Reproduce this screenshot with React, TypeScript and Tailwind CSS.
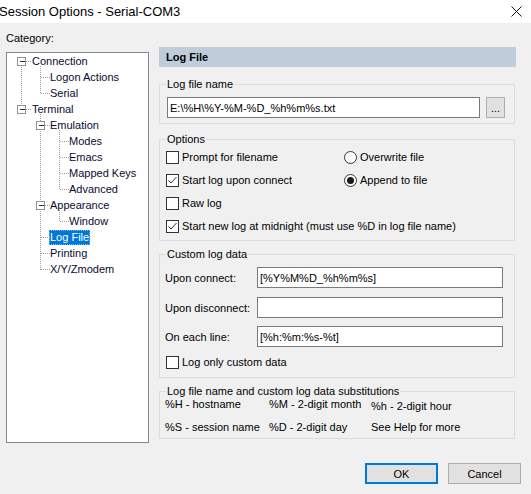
type TreeItem = {
  label: string;
  level: 0 | 1 | 2;
  box?: boolean;
  selected?: boolean;
};

const TREE: TreeItem[] = [
  { label: "Connection", level: 0, box: true },
  { label: "Logon Actions", level: 1 },
  { label: "Serial", level: 1 },
  { label: "Terminal", level: 0, box: true },
  { label: "Emulation", level: 1, box: true },
  { label: "Modes", level: 2 },
  { label: "Emacs", level: 2 },
  { label: "Mapped Keys", level: 2 },
  { label: "Advanced", level: 2 },
  { label: "Appearance", level: 1, box: true },
  { label: "Window", level: 2 },
  { label: "Log File", level: 1, selected: true },
  { label: "Printing", level: 1 },
  { label: "X/Y/Zmodem", level: 1 },
];

const INDENT = ["pl-[25px]", "pl-[43px]", "pl-[62px]"];
const LX = [14.5, 33.5, 52.5];

const cy = (i: number) => 16 * i + 8.5;

// dotted connector lines + expand boxes
function TreeLines() {
  const dot = { stroke: "#a0a0a0", strokeDasharray: "1 1", shapeRendering: "crispEdges" as const };
  const lines: JSX.Element[] = [];
  const v = (x: number, y1: number, y2: number, k: string) =>
    lines.push(<line key={k} x1={x} x2={x} y1={y1} y2={y2} {...dot} />);
  const h = (x1: number, x2: number, y: number, k: string) =>
    lines.push(<line key={k} x1={x1} x2={x2} y1={y} y2={y} {...dot} />);

  // level 0
  v(LX[0], cy(0) + 5, cy(3) - 4, "v0");
  // connection children
  v(LX[1], cy(0) + 4, cy(2), "v1a");
  // terminal children
  v(LX[1], cy(3) + 4, cy(4) - 4, "v1b");
  v(LX[1], cy(4) + 5, cy(9) - 4, "v1c");
  v(LX[1], cy(9) + 5, cy(13), "v1d");
  // emulation children
  v(LX[2], cy(4) + 4, cy(8), "v2a");
  // appearance children
  v(LX[2], cy(9) + 4, cy(10), "v2b");

  TREE.forEach((t, i) => {
    const x = LX[t.level];
    if (t.box) h(x + 4, x + 10, cy(i), "h" + i);
    else h(x, x + 9, cy(i), "h" + i);
  });

  const boxes = TREE.map((t, i) =>
    t.box ? (
      <g key={"b" + i} shapeRendering="crispEdges">
        <rect x={LX[t.level] - 4} y={cy(i) - 4} width={8} height={8} fill="#fff" stroke="#919191" />
        <line x1={LX[t.level] - 2} x2={LX[t.level] + 3} y1={cy(i)} y2={cy(i)} stroke="#333" />
      </g>
    ) : null
  );

  return (
    <svg className="absolute left-0 top-0 pointer-events-none" width="90" height="230">
      {lines}
      {boxes}
    </svg>
  );
}

function CheckBox({ checked }: { checked?: boolean }) {
  return (
    <span className="w-[13px] h-[13px] border border-[#333] bg-white flex items-center justify-center shrink-0">
      {checked && (
        <svg width="11" height="11" viewBox="0 0 11 11">
          <path d="M1.5 5.5 L4 8 L9.5 2" fill="none" stroke="#333" strokeWidth="1" />
        </svg>
      )}
    </span>
  );
}

function Radio({ checked }: { checked?: boolean }) {
  return (
    <span className="w-[13px] h-[13px] rounded-full border border-[#333] bg-white flex items-center justify-center shrink-0">
      {checked && <span className="w-[7px] h-[7px] rounded-full bg-[#1a1a1a]" />}
    </span>
  );
}

function Check({ label, checked }: { label: string; checked?: boolean }) {
  return (
    <label className="flex items-center gap-[3px] h-[20px] whitespace-nowrap">
      <CheckBox checked={checked} />
      <span>{label}</span>
    </label>
  );
}

function Opt({ label, checked }: { label: string; checked?: boolean }) {
  return (
    <label className="flex items-center gap-[3px] h-[20px] whitespace-nowrap">
      <Radio checked={checked} />
      <span>{label}</span>
    </label>
  );
}

function Field({ value, className = "" }: { value?: string; className?: string }) {
  return (
    <div
      className={
        "h-[21px] bg-white border border-[#7a7a7a] flex items-center pl-[2px] text-black whitespace-nowrap " +
        className
      }
    >
      {value}
    </div>
  );
}

function DataRow({ label, value, className = "" }: { label: string; value?: string; className?: string }) {
  return (
    <div className={"flex items-center " + className}>
      <span className="w-[97px] pl-[5px] whitespace-nowrap">{label}</span>
      <Field value={value} className="w-[246px]" />
    </div>
  );
}

export default function App() {
  return (
    <div className="w-[531px] h-[494px] bg-[#f0f0f0] overflow-hidden text-[11px] leading-[16px] text-black font-['Liberation_Sans',Arial,sans-serif]">
      {/* title bar */}
      <div className="h-[23px] bg-white flex items-center justify-between">
        <span className="text-[13px] -ml-[1px] text-black">Session Options - Serial-COM3</span>
        <svg width="11" height="11" viewBox="0 0 11 11" className="mr-[9px]">
          <path d="M0.5 0.5 L10.5 10.5 M10.5 0.5 L0.5 10.5" stroke="#111" strokeWidth="1" />
        </svg>
      </div>

      <div className="flex h-[420px]">
        {/* category tree */}
        <div className="ml-[6px] w-[143px]">
          <div className="mt-[7px] h-[16px]">Category:</div>
          <div className="relative mt-[6px] h-[391px] bg-white border border-[#828790]">
            <TreeLines />
            {TREE.map((t) => (
              <div key={t.label} className={"h-[16px] flex items-center " + INDENT[t.level]}>
                {t.selected ? (
                  <span className="-ml-[1px] px-[1px] h-[15px] flex items-center bg-[#0078d7] text-white outline outline-1 outline-dotted outline-[#6fb4ff] -outline-offset-1">
                    {t.label}
                  </span>
                ) : (
                  <span className="text-[#0a0a30]">{t.label}</span>
                )}
              </div>
            ))}
          </div>
        </div>

        {/* log file page */}
        <div className="ml-[10px] w-[357px]">
          <div className="mt-[24px] h-[20px] bg-[#bfcddb] flex items-center pl-[7px] font-bold">Log File</div>

          <fieldset className="mt-[9px] w-[356px] border border-[#dcdcdc] pb-[5px]">
            <legend className="ml-[6px] px-[1px]">Log file name</legend>
            <div className="mt-[5px] pl-[7px] flex items-center">
              <Field value="E:\%H\%Y-%M-%D_%h%m%s.txt" className="w-[313px]" />
              <button className="ml-[6px] w-[19px] h-[21px] bg-[#e1e1e1] border border-[#adadad] leading-[14px] text-center">
                ...
              </button>
            </div>
          </fieldset>

          <fieldset className="mt-[7px] w-[356px] border border-[#dcdcdc] pb-[4px]">
            <legend className="ml-[6px] px-[1px]">Options</legend>
            <div className="pl-[6px] grid grid-cols-[178px_1fr] gap-y-[3px]">
              <Check label="Prompt for filename" />
              <Opt label="Overwrite file" />
              <Check label="Start log upon connect" checked />
              <Opt label="Append to file" checked />
              <Check label="Raw log" />
              <div />
              <div className="col-span-2">
                <Check label="Start new log at midnight (must use %D in log file name)" checked />
              </div>
            </div>
          </fieldset>

          <fieldset className="mt-[5px] w-[356px] border border-[#dcdcdc] pb-[5px]">
            <legend className="ml-[6px] px-[1px]">Custom log data</legend>
            <DataRow label="Upon connect:" value="[%Y%M%D_%h%m%s]" className="mt-[5px]" />
            <DataRow label="Upon disconnect:" className="mt-[9px]" />
            <DataRow label="On each line:" value="[%h:%m:%s-%t]" className="mt-[8px]" />
            <div className="pl-[6px] mt-[5px]">
              <Check label="Log only custom data" />
            </div>
          </fieldset>

          <fieldset className="mt-[5px] w-[356px] border border-[#dcdcdc] pb-[3px]">
            <legend className="ml-[6px] px-[1px]">Log file name and custom log data substitutions</legend>
            <div className="pl-[5px] -mt-[3px] grid grid-cols-[104px_102px_1fr] gap-y-[5px] whitespace-nowrap">
              <span>%H - hostname</span>
              <span>%M - 2-digit month</span>
              <span className="mt-[2px]">%h - 2-digit hour</span>
              <span>%S - session name</span>
              <span>%D - 2-digit day</span>
              <span>See Help for more</span>
            </div>
          </fieldset>
        </div>
      </div>

      {/* buttons */}
      <div className="mt-[20px] flex justify-end gap-[10px] pr-[10px]">
        <button className="w-[73px] h-[21px] bg-[#e1e1e1] border-2 border-[#0078d7]">OK</button>
        <button className="w-[73px] h-[21px] bg-[#e1e1e1] border border-[#adadad]">Cancel</button>
      </div>
    </div>
  );
}
